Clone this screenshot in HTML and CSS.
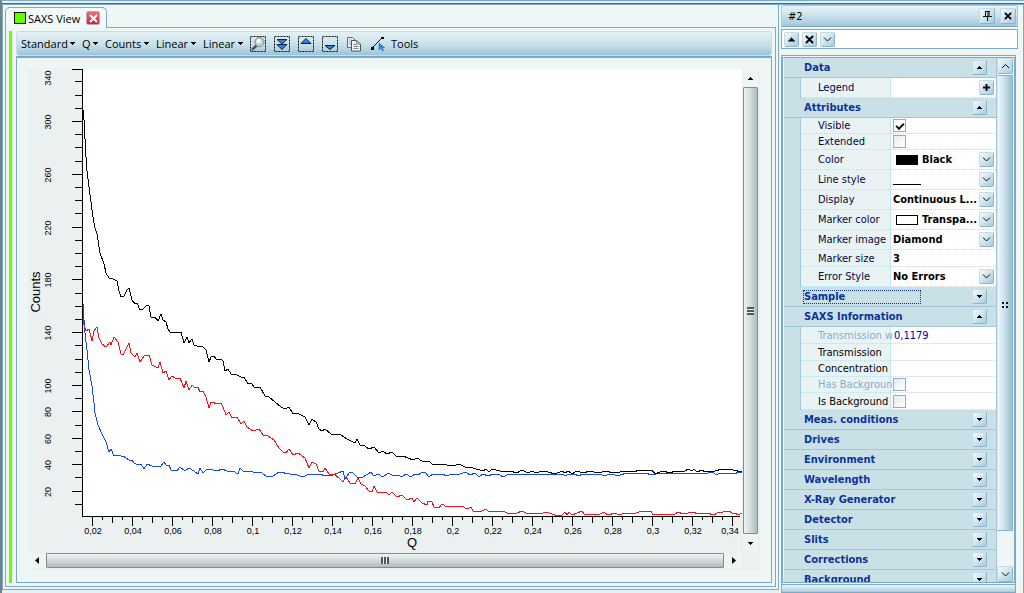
FILE: index.html
```
<!DOCTYPE html>
<html lang="en">
<head>
    <meta charset="UTF-8">
    <meta name="viewport" content="width=device-width, initial-scale=1.0">
    <title>SAXS View</title>
    <link rel="stylesheet" href="styles.css">
</head>
<body>
    <!-- shared arrow glyphs -->
    <svg class="defs" aria-hidden="true">
        <symbol id="up" viewBox="0 0 7 7"><path d="M3 2h1v1h1v1h1v1H1V4h1V3h1z"/></symbol>
        <symbol id="down" viewBox="0 0 7 7"><path d="M1 2h5v1H5v1H4v1H3V4H2V3H1z"/></symbol>
        <symbol id="left" viewBox="0 0 7 7"><path d="M5 0v7L1 3.500z"/></symbol>
        <symbol id="right" viewBox="0 0 7 7"><path d="M2 0v7l4-3.500z"/></symbol>
        <symbol id="chev" viewBox="0 0 9 7"><path d="M1 1.500l3.500 3.500L8 1.500" fill="none" stroke="#111"/></symbol>
        <symbol id="chev-up" viewBox="0 0 9 7"><path d="M1 5l3.500-3.500L8 5" fill="none" stroke="#111"/></symbol>
        <symbol id="cross" viewBox="0 0 9 9"><path d="M1 1l7 7M8 1L1 8" fill="none" stroke="currentColor" stroke-width="2"/></symbol>
    </svg>

    <div class="workspace">
        <main class="view">
            <div class="tab">
                <span class="tab-color"></span>
                <span class="tab-name">SAXS View</span>
                <button class="tab-close" aria-label="Close"><svg width="9" height="9"><use href="#cross"/></svg></button>
            </div>
            <div class="page">
                <div class="marker"></div>
                <div class="page-body">
                    <div class="toolbar">
                        <span class="menu"><select aria-label="Mode"><option>Standard</option></select><svg width="7" height="7"><use href="#down"/></svg></span>
                        <span class="menu"><select aria-label="X values"><option>Q</option></select><svg width="7" height="7"><use href="#down"/></svg></span>
                        <span class="menu"><select aria-label="Y values"><option>Counts</option></select><svg width="7" height="7"><use href="#down"/></svg></span>
                        <span class="menu"><select aria-label="X scale"><option>Linear</option></select><svg width="7" height="7"><use href="#down"/></svg></span>
                        <span class="menu"><select aria-label="Y scale"><option>Linear</option></select><svg width="7" height="7"><use href="#down"/></svg></span>
                        <div class="tools">
                            <button aria-label="Zoom">
                                <svg width="16" height="16" viewBox="0 0 16 16">
                                    <rect x=".5" y=".5" width="15" height="15" fill="none" stroke="#111" stroke-dasharray="2 1"/>
                                    <path d="M2 14l4.500-4.500" stroke="#555" stroke-width="2.500"/>
                                    <circle cx="9.500" cy="6" r="4.500" fill="#c9d0d0" stroke="#7c8484"/>
                                    <circle cx="8.500" cy="5" r="2" fill="#fff"/>
                                </svg>
                            </button>
                            <button aria-label="Fit all">
                                <svg width="16" height="16" viewBox="0 0 16 16">
                                    <rect x=".5" y=".5" width="15" height="15" fill="none" stroke="#111" stroke-dasharray="2 1"/>
                                    <path d="M3 3.500h10L8 8zM3 8.500h10L8 13.500z" fill="#2f7df5" stroke="#123"/>
                                </svg>
                            </button>
                            <button aria-label="Move up">
                                <svg width="16" height="16" viewBox="0 0 16 16">
                                    <rect x=".5" y=".5" width="15" height="15" fill="none" stroke="#111" stroke-dasharray="2 1"/>
                                    <path d="M3 7.500h10L8 2.500z" fill="#2f7df5" stroke="#123"/>
                                </svg>
                            </button>
                            <button aria-label="Move down">
                                <svg width="16" height="16" viewBox="0 0 16 16">
                                    <rect x=".5" y=".5" width="15" height="15" fill="none" stroke="#111" stroke-dasharray="2 1"/>
                                    <path d="M3 9.500h10L8 13.500z" fill="#2f7df5" stroke="#123"/>
                                </svg>
                            </button>
                            <button aria-label="Copy">
                                <svg width="16" height="16" viewBox="0 0 16 16">
                                    <path d="M1.500 1.500h5l3 3v7h-8z" fill="#eef3f3" stroke="#5c6a6c"/>
                                    <path d="M3 4h3M3 6h3M3 8h3" stroke="#9aa"/>
                                    <path d="M5.500 4.500h5l4 3.500v7h-9z" fill="#f4f6f6" stroke="#48575a"/>
                                    <path d="M10.500 4.500v3.500h4M7.500 8.500h3M7.500 10.500h5M7.500 12.500h5" fill="none" stroke="#7a878a"/>
                                </svg>
                            </button>
                            <button class="tools-button">
                                <svg width="16" height="16" viewBox="0 0 16 16">
                                    <path d="M2 12L12 2" stroke="#111"/>
                                    <path d="M1 11h3v3H1zM11 1h3v2h-3z"/>
                                    <path d="M9 7v7l2-2 1.500 3 1-.5-1.500-3h2.500z" fill="#2f86e8" stroke="#1d5fae" stroke-width=".5"/>
                                </svg>
                                Tools
                            </button>
                        </div>
                    </div>
                    <div class="plot">
                        <svg class="chart" id="chart" viewBox="28 69 714 483" preserveAspectRatio="xMinYMin" role="img" aria-label="Counts over Q">
                            <rect x="83" y="69" width="659" height="447" fill="#fff"/>
                            <path id="ticks"/>
                            <text class="axis-name" transform="translate(40 292) rotate(-90)">Counts</text>
                            <text class="axis-name" x="412" y="547">Q</text>
                        </svg>
                        <div class="bar bar-v">
                            <button aria-label="Scroll up"><svg width="7" height="7"><use href="#up"/></svg></button>
                            <div class="thumb"><i class="grip"></i></div>
                            <button aria-label="Scroll down"><svg width="7" height="7"><use href="#down"/></svg></button>
                        </div>
                        <div class="bar bar-h">
                            <button aria-label="Scroll left"><svg width="7" height="7"><use href="#left"/></svg></button>
                            <div class="thumb"><i class="grip"></i></div>
                            <button aria-label="Scroll right"><svg width="7" height="7"><use href="#right"/></svg></button>
                        </div>
                    </div>
                </div>
            </div>
        </main>

        <aside class="side">
            <div class="side-title">
                <span>#2</span>
                <button class="btn big" aria-label="Pin"><svg width="9" height="10" viewBox="0 0 9 10"><path d="M2 .5h5M2.500 0v5M6 0v5M5 0v5M0 5.500h9M4.500 6v4" fill="none" stroke="#111"/></svg></button>
                <button class="btn big" aria-label="Close"><svg width="8" height="8"><use href="#cross"/></svg></button>
            </div>
            <div class="filter">
                <button class="btn" aria-label="Previous"><svg width="9" height="9"><use href="#up"/></svg></button>
                <button class="btn" aria-label="Clear"><svg width="9" height="9"><use href="#cross"/></svg></button>
                <button class="btn" aria-label="Next"><svg width="9" height="7"><use href="#chev"/></svg></button>
                <input type="text" aria-label="Filter">
            </div>
            <div class="props">
                <div class="groups">
                    <h2>Data <button class="btn" aria-label="Collapse"><svg width="7" height="7"><use href="#up"/></svg></button></h2>
                    <table>
                        <tr class="tall"><th><label for="legend">Legend</label></th><td><div class="cell"><input type="text" id="legend"><button class="btn" aria-label="Add"><svg width="7" height="7" viewBox="0 0 7 7"><path d="M0 3.500h7M3.500 0v7" stroke="#111" stroke-width="2"/></svg></button></div></td></tr>
                    </table>
                    <h2>Attributes <button class="btn" aria-label="Collapse"><svg width="7" height="7"><use href="#up"/></svg></button></h2>
                    <table>
                        <tr><th><label for="visible">Visible</label></th><td><input type="checkbox" id="visible" checked></td></tr>
                        <tr><th><label for="extended">Extended</label></th><td><input type="checkbox" id="extended"></td></tr>
                        <tr class="tall"><th><label for="color">Color</label></th><td><div class="cell"><i class="swatch black"></i><select id="color"><option>Black</option></select><span class="btn"><svg width="9" height="7"><use href="#chev"/></svg></span></div></td></tr>
                        <tr class="tall"><th><label for="line">Line style</label></th><td><div class="cell"><i class="line"></i><select id="line"><option label=" "></option></select><span class="btn"><svg width="9" height="7"><use href="#chev"/></svg></span></div></td></tr>
                        <tr class="tall"><th><label for="display">Display</label></th><td><div class="cell"><select id="display"><option>Continuous L...</option></select><span class="btn"><svg width="9" height="7"><use href="#chev"/></svg></span></div></td></tr>
                        <tr class="tall"><th><label for="mcolor">Marker color</label></th><td><div class="cell"><i class="swatch"></i><select id="mcolor"><option>Transpa...</option></select><span class="btn"><svg width="9" height="7"><use href="#chev"/></svg></span></div></td></tr>
                        <tr class="tall"><th><label for="mimage">Marker image</label></th><td><div class="cell"><select id="mimage"><option>Diamond</option></select><span class="btn"><svg width="9" height="7"><use href="#chev"/></svg></span></div></td></tr>
                        <tr class="mid"><th><label for="msize">Marker size</label></th><td><div class="cell"><input type="text" id="msize" value="3"></div></td></tr>
                        <tr class="tall"><th><label for="errors">Error Style</label></th><td><div class="cell"><select id="errors"><option>No Errors</option></select><span class="btn"><svg width="9" height="7"><use href="#chev"/></svg></span></div></td></tr>
                    </table>
                    <h2><span class="focused">Sample</span> <button class="btn" aria-label="Expand"><svg width="7" height="7"><use href="#down"/></svg></button></h2>
                    <h2>SAXS Information <button class="btn" aria-label="Collapse"><svg width="7" height="7"><use href="#up"/></svg></button></h2>
                    <table class="info">
                        <tr class="mid off"><th><label for="trw">Transmission w</label></th><td><div class="cell"><input type="text" id="trw" class="number" value="0,1179"></div></td></tr>
                        <tr class="mid"><th><label for="tr">Transmission</label></th><td><div class="cell"><input type="text" id="tr"></div></td></tr>
                        <tr><th><label for="conc">Concentration</label></th><td><div class="cell"><input type="text" id="conc"></div></td></tr>
                        <tr class="off"><th><label for="hasbg">Has Backgroun</label></th><td><input type="checkbox" id="hasbg"></td></tr>
                        <tr class="mid"><th><label for="isbg">Is Background</label></th><td><input type="checkbox" id="isbg"></td></tr>
                    </table>
                    <h2>Meas. conditions <button class="btn" aria-label="Expand"><svg width="7" height="7"><use href="#down"/></svg></button></h2>
                    <h2>Drives <button class="btn" aria-label="Expand"><svg width="7" height="7"><use href="#down"/></svg></button></h2>
                    <h2>Environment <button class="btn" aria-label="Expand"><svg width="7" height="7"><use href="#down"/></svg></button></h2>
                    <h2>Wavelength <button class="btn" aria-label="Expand"><svg width="7" height="7"><use href="#down"/></svg></button></h2>
                    <h2>X-Ray Generator <button class="btn" aria-label="Expand"><svg width="7" height="7"><use href="#down"/></svg></button></h2>
                    <h2>Detector <button class="btn" aria-label="Expand"><svg width="7" height="7"><use href="#down"/></svg></button></h2>
                    <h2>Slits <button class="btn" aria-label="Expand"><svg width="7" height="7"><use href="#down"/></svg></button></h2>
                    <h2>Corrections <button class="btn" aria-label="Expand"><svg width="7" height="7"><use href="#down"/></svg></button></h2>
                    <h2>Background <button class="btn" aria-label="Expand"><svg width="7" height="7"><use href="#down"/></svg></button></h2>
                </div>
                <div class="side-bar">
                    <button class="btn" aria-label="Scroll up"><svg width="9" height="7"><use href="#chev-up"/></svg></button>
                    <div class="side-thumb"><i class="dots"></i></div>
                    <div class="side-track"></div>
                    <button class="btn" aria-label="Scroll down"><svg width="9" height="7"><use href="#chev"/></svg></button>
                </div>
            </div>
            <div class="splitter"></div>
        </aside>
    </div>
    <script src="chart.js"></script>
</body>
</html>
```
FILE: chart.js
```
let chart = document.getElementById("chart");
let ns = "http://www.w3.org/2000/svg";

// curves, as x,y pairs
let curves = [
    { color: "#1446ff", points: "83,304 84,320 85,333 87,350 89,370 92,386 94,403 95,413 98,425 102,434 106,442 109,452 111,449 114,456 118,455 121,456 123,456 129,460 132,460 134,463 138,465 141,464 144,469 147,464 152,466 155,467 157,466 160,467 164,462 167,466 169,465 171,470 177,471 180,467 185,471 189,468 194,471 198,474 200,468 203,473 207,469 213,470 217,471 222,469 227,471 233,471 238,474 240,468 243,471 253,472 262,473 267,477 273,476 279,472 290,474 297,475 303,477 309,474 320,474 325,476 333,475 343,471 345,479 349,473 352,472 357,477 363,477 371,472 374,476 378,474 383,477 388,473 392,475 398,475 402,477 406,474 411,477 415,474 418,475 423,472 425,472 429,477 433,474 442,474 447,476 451,474 457,475 466,472 470,475 475,473 479,477 483,474 488,476 493,474 500,475 503,477 507,475 525,474 550,474 562,474 566,476 568,474 572,475 575,474 578,476 583,474 600,474 604,476 610,474 615,475 620,475 627,473 633,474 647,473 650,475 663,473 680,473 693,473 700,474 708,473 713,472 716,475 720,473 730,473 735,474 738,472 742,473" },
    { color: "#fa1018", points: "83,319 84,325 86,331 89,329 92,341 94,331 97,327 99,338 102,344 106,347 110,342 111,345 114,337 118,342 121,354 123,355 126,349 129,343 131,353 135,357 137,353 140,362 144,356 149,355 152,365 158,368 160,362 163,373 166,371 169,380 172,376 175,378 180,378 184,388 186,381 189,390 192,385 195,388 198,387 200,392 203,391 206,397 209,408 211,402 218,404 221,403 223,407 226,415 229,412 232,418 237,417 241,424 244,421 247,427 253,431 259,429 263,435 268,436 274,440 279,448 283,452 286,453 289,449 293,455 298,453 305,458 309,468 312,462 316,464 319,471 323,472 325,468 329,474 335,475 339,478 343,482 346,477 350,483 355,484 358,478 361,484 365,486 369,491 372,492 374,486 377,492 387,493 389,495 392,492 397,497 402,495 407,500 412,498 414,502 417,498 422,503 427,505 428,501 432,502 434,507 439,508 442,504 447,507 462,506 467,509 471,507 473,511 482,511 486,509 488,511 503,511 507,513 517,513 522,511 528,514 536,513 540,514 546,512 555,515 562,515 565,512 567,515 569,512 572,515 582,511 584,514 600,514 604,512 608,515 615,513 619,515 625,513 633,514 642,511 648,512 651,511 653,515 657,514 675,514 678,512 683,514 693,512 698,514 707,513 714,515 717,513 729,511 732,513 735,513 738,515 742,513" },
    { color: "#000", points: "83,110 84,120 85,139 86,157 87,171 89,187 91,202 93,217 95,228 97,234 100,253 104,264 106,273 109,278 113,279 117,281 119,291 121,297 124,296 127,290 129,288 132,300 135,304 137,303 140,310 143,309 147,305 149,306 151,317 155,317 158,321 161,314 163,320 166,322 168,329 170,332 181,332 184,343 187,337 189,343 192,339 194,345 197,346 203,347 206,350 209,362 211,357 214,356 217,360 221,359 223,361 225,371 228,369 231,374 237,375 241,377 244,377 248,384 251,383 255,388 260,387 265,396 269,397 275,402 281,407 285,409 289,407 293,414 297,413 305,417 309,425 312,419 316,422 319,429 322,431 325,429 331,434 341,435 347,439 355,443 357,439 360,445 365,446 369,449 374,447 379,453 383,451 387,454 392,452 397,457 403,456 413,460 417,458 422,461 430,462 433,465 440,464 453,466 459,464 465,467 473,468 483,471 486,469 489,472 492,469 500,471 504,472 510,471 517,473 522,470 528,473 532,471 536,473 542,471 548,472 555,474 562,471 565,473 568,471 572,474 577,471 583,473 590,471 598,473 606,471 613,473 627,471 633,472 640,470 647,471 652,470 655,474 660,472 665,471 668,473 677,471 685,471 688,469 692,471 694,469 697,472 702,470 705,472 715,471 722,469 733,470 742,472" }
];

function drawText(text, x, y, turned) {
    let label = document.createElementNS(ns, "text");
    label.textContent = text;
    label.setAttribute("class", "tick-label");
    label.setAttribute("transform", "translate(" + x + " " + y + ")" + (turned ? " rotate(-90)" : ""));
    chart.appendChild(label);
}

let ticks = "M82.5 69V516.5H740";

// counts axis: a tick every 10, a label every 40 and every 20 below 100
for (let v = 10; v <= 340; v += 10) {
    let y = Math.max(69, Math.round(517 - v * 1.32));
    let major = v % 40 == 20 || (v < 100 && v % 20 == 0);
    ticks += "M" + (major ? 72 : 75) + " " + (y + 0.5) + "H82";
    if (major) drawText(v, 51, v == 340 ? 78 : y + 1, true);
}

// Q axis: a tick every 0.005, a label every 0.02
for (let i = 0; i <= 64; i++) {
    let x = 92 + i * 10;
    let length = i % 4 == 0 ? 10 : i % 2 == 0 ? 7 : 4;
    ticks += "M" + (x + 0.5) + " 516v" + length;
    if (i % 4 == 0) drawText(String((i / 4 + 1) * 2 / 100).replace(".", ","), i == 64 ? 730 : x + 1, 534);
}
document.getElementById("ticks").setAttribute("d", ticks);

for (let curve of curves) {
    let line = document.createElementNS(ns, "polyline");
    line.setAttribute("points", curve.points);
    line.setAttribute("stroke", curve.color);
    chart.appendChild(line);
}
```
FILE: styles.css
```
* {
    box-sizing: border-box;
}
body {
    margin: 0;
    height: 100vh;
    min-height: 560px;
    padding-top: 2px;
    border-top: 1px solid #7ba9c9;
    border-left: 2px solid #6f8283;
    background: #e3f0f4;
    font-family: "DejaVu Sans Condensed", "DejaVu Sans", sans-serif;
    font-size: 11px;
    color: #000;
    overflow: hidden;
}
.defs {
    display: none;
}
button, select, input {
    font: inherit;
    color: inherit;
    margin: 0;
    padding: 0;
    border: 0;
    background: none;
}
select {
    appearance: none;
    outline: 0;
}
.workspace {
    display: flex;
    height: 100%;
    border-top: 1px solid #5f6668;
}

/* left: the plot window */
.view {
    flex: 1;
    min-width: 0;
    display: flex;
    flex-direction: column;
    margin-bottom: 3px;
    padding: 2px;
    border: 1px solid #7ba9c9;
    background: #eff6f6;
}
.tab {
    z-index: 1;
    align-self: flex-start;
    display: flex;
    align-items: center;
    height: 21px;
    margin-bottom: -1px;
    padding: 0 6px 0 8px;
    border: 1px solid #7ba9c9;
    border-bottom: 0;
    border-radius: 5px 5px 0 0;
    background: #f3f9f9;
}
.tab-color {
    width: 12px;
    height: 12px;
    border: 1px solid #111;
    background: #66ff00;
}
.tab-name {
    margin: 0 6px 0 2px;
    font-family: "Open Sans", sans-serif;
}
.tab-close {
    display: grid;
    place-items: center;
    width: 14px;
    height: 14px;
    border: 1px solid #b9a8b8;
    border-radius: 2px;
    background: linear-gradient(#f26c7c, #dc1c3c);
    color: #fff;
}
.page {
    flex: 1;
    min-height: 0;
    display: flex;
    gap: 4px;
    padding: 3px;
    border: 1px solid #7ba9c9;
}
.marker {
    width: 3px;
    background: #66ff00;
}
.page-body {
    flex: 1;
    min-width: 0;
    display: flex;
    flex-direction: column;
}
.toolbar {
    display: flex;
    align-items: center;
    gap: 6px;
    height: 25px;
    padding: 0 4px;
    border: 1px solid #c5dfe9;
    border-radius: 3px;
    background: linear-gradient(#e4f1f4, #c8e0ea 55%, #9cc4d8);
    font-family: "Open Sans", sans-serif;
}
.menu {
    display: flex;
    align-items: center;
    gap: 1px;
}
.tools {
    display: flex;
    align-items: center;
    gap: 8px;
}
.tools button {
    display: flex;
    align-items: center;
    gap: 5px;
}
.plot {
    flex: 1;
    min-height: 0;
    display: grid;
    grid-template: 1fr 18px / 1fr 18px;
    padding: 11px 11px 12px 11px;
    border: 1px solid #7ba9c9;
    border-top-width: 2px;
    background: linear-gradient(#ebf0f0, #ebf0f0) content-box, #eff6f6;
}
.chart {
    width: 100%;
    height: 100%;
    min-height: 0;
    shape-rendering: crispEdges;
    font-family: "Liberation Sans", Arial, sans-serif;
    text-anchor: middle;
}
.chart path,
.chart polyline {
    fill: none;
    stroke-width: 1;
}
.chart path {
    stroke: #000;
}
.tick-label {
    font-size: 9px;
}
.axis-name {
    font-size: 13px;
}
.bar {
    display: flex;
}
.bar-v {
    flex-direction: column;
    padding: 0 2px 0 1px;
}
.bar-h {
    padding: 1px 0 2px;
}
.bar button {
    flex: 0 0 18px;
    display: grid;
    place-items: center;
    background: #eff4f4;
}
.thumb {
    flex: 1;
    display: grid;
    place-items: center;
    border: 1px solid #7d8f92;
    border-radius: 1px;
}
.bar-v .thumb {
    background: linear-gradient(90deg, #edf2f2, #d5dede 45%, #adbdc0);
}
.bar-h .thumb {
    background: linear-gradient(#edf2f2, #d5dede 45%, #adbdc0);
}
.grip {
    width: 8px;
    height: 7px;
    background: repeating-linear-gradient(90deg, #4c5a5c 0 2px, #eef3f3 2px 3px);
}
.bar-v .grip {
    width: 7px;
    height: 8px;
    background: repeating-linear-gradient(#4c5a5c 0 2px, #eef3f3 2px 3px);
}

/* right: the property panel */
.side {
    width: 245px;
    display: flex;
    flex-direction: column;
    padding: 0 5px 0 2px;
    border: 1px solid #7ba9c9;
    border-width: 1px 1px 0 0;
    background: #eff6f6;
}
.btn {
    flex: none;
    display: grid;
    place-items: center;
    width: 15px;
    height: 15px;
    border: 1px solid #8bb4ce;
    border-top-color: #c3dce8;
    border-left-color: #c3dce8;
    border-radius: 2px;
    background: linear-gradient(135deg, #f4fafc, #a9cbdc);
}
.big {
    width: 16px;
    height: 16px;
}
.side-title {
    display: flex;
    align-items: center;
    gap: 5px;
    height: 22px;
    padding: 0 1px 0 6px;
    border: 1px solid #a9cbdc;
    border-bottom-color: #7ba9c9;
    border-radius: 3px 3px 0 0;
    background: linear-gradient(#e9f4f7, #c8e0ea 50%, #a3c8da);
}
.side-title span {
    flex: 1;
}
.filter {
    display: flex;
    align-items: center;
    gap: 3px;
    height: 20px;
    margin: 2px 0 6px;
    padding: 0 2px;
    border: 1px solid #7ba9c9;
    background: #fff;
}
.filter input {
    flex: 1;
    min-width: 0;
}
.props {
    flex: 1;
    min-height: 0;
    display: flex;
    margin-right: 2px;
    padding: 0 1px;
    border: 3px double #7ba9c9;
    border-width: 3px 2px;
}
.groups {
    flex: 1;
    min-width: 0;
    overflow: hidden;
    background: #c9e1e6;
    border-right: 1px solid #a3c6da;
}
h2 {
    display: flex;
    align-items: center;
    justify-content: space-between;
    height: 20px;
    margin: 0;
    padding: 0 9px 0 20px;
    border-bottom: 1px solid #a3c6da;
    font-size: 11px;
    line-height: 13px;
    color: #0c329c;
}
.focused {
    width: 118px;
    height: 14px;
    margin-left: -1px;
    border: 1px dotted #0c329c;
    line-height: 12px;
}
table {
    width: calc(100% - 16px);
    margin-left: 16px;
    border-spacing: 0;
    table-layout: fixed;
    background: #fff;
    border-left: 1px solid #a3c6da;
}
th {
    width: 90px;
    height: 16px;
    padding: 0 0 0 17px;
    border-bottom: 1px dotted #b9e0ea;
    border-right: 1px solid #c4e6ef;
    background: #e9f3f4;
    font-weight: normal;
    line-height: 13px;
    text-align: left;
    white-space: nowrap;
    color: #05053f;
}
td {
    height: 16px;
    padding: 0 2px;
    border-bottom: 1px dotted #b9e0ea;
    font-weight: bold;
    line-height: 13px;
}
.info th {
    color: #000;
}
.info .off th {
    color: #86add0;
}
.mid th, .mid td {
    height: 17px;
}
.tall th, .tall td {
    height: 20px;
}
.cell {
    display: flex;
    align-items: center;
}
.cell select, .cell input {
    flex: 1;
    min-width: 0;
    height: 15px;
}
.cell .number {
    padding-left: 1px;
    font-weight: normal;
    color: #0000a0;
}
td input[type="checkbox"] {
    appearance: none;
    display: block;
    width: 13px;
    height: 13px;
    border: 1px solid #8fb0c6;
    background: linear-gradient(135deg, #e2ecee, #fff);
}
td input:checked {
    background: #fff;
}
td input:checked::before {
    content: "";
    display: block;
    width: 6px;
    height: 3px;
    margin: 3px 0 0 2px;
    border: solid #111;
    border-width: 0 0 2px 2px;
    transform: rotate(-45deg);
}
.swatch {
    width: 22px;
    height: 10px;
    margin: 0 4px 0 3px;
    border: 1px solid #000;
}
.black {
    background: #000;
}
.line {
    align-self: flex-end;
    width: 28px;
    margin-bottom: 2px;
    border-bottom: 1px solid #000;
}
.side-bar {
    width: 16px;
    display: flex;
    flex-direction: column;
    background: #eff6f6;
}
.side-bar .btn {
    width: 16px;
    height: 16px;
}
.side-thumb {
    flex: 13;
    display: grid;
    place-items: center;
    margin-top: 1px;
    border: 1px solid #8bb4ce;
    border-left-color: #d5e8ef;
    background: linear-gradient(90deg, #eef7fa, #c8dfe9 50%, #96bdd2);
}
.dots {
    width: 2px;
    height: 2px;
    margin-right: 4px;
    background: #111;
    box-shadow: 4px 0 #111, 0 4px #111, 4px 4px #111;
}
.side-track {
    flex: 1;
}
.splitter {
    height: 8px;
    margin-right: 2px;
    border: 1px solid #7ba9c9;
    border-top: 0;
    background: linear-gradient(#eff6f6, #a9cbdc);
}
```
